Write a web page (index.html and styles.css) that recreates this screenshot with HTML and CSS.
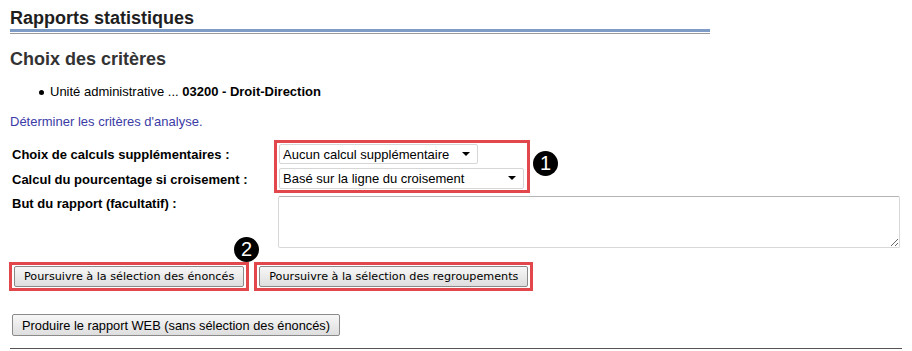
FILE: index.html
```html
<!DOCTYPE html>
<html lang="fr">
<head>
    <meta charset="UTF-8">
    <title>Rapports statistiques</title>
    <link rel="stylesheet" href="styles.css">
</head>
<body>
    <h1 class="page-title">Rapports statistiques</h1>

    <h2 class="section-title">Choix des critères</h2>
    <ul class="criteria">
        <li>Unité administrative ... <strong>03200 - Droit-Direction</strong></li>
    </ul>

    <a href="#" class="analyse-link">Déterminer les critères d'analyse.</a>

    <div class="form-grid">
        <div class="labels-pair">
            <label class="field-label">Choix de calculs supplémentaires :</label>
            <label class="field-label">Calcul du pourcentage si croisement :</label>
        </div>
        <div class="controls-pair">
            <div class="highlight selects">
                <span class="select-wrap select-short">
                    <select>
                        <option>Aucun calcul supplémentaire</option>
                    </select>
                </span>
                <span class="select-wrap select-long">
                    <select>
                        <option>Basé sur la ligne du croisement</option>
                    </select>
                </span>
            </div>
            <span class="marker marker-1">1</span>
        </div>

        <label class="field-label label-but">But du rapport (facultatif) :</label>
        <textarea class="but-text"></textarea>
    </div>

    <div class="actions">
        <span class="highlight">
            <button class="btn">Poursuivre à la sélection des énoncés</button>
        </span>
        <span class="highlight">
            <button class="btn">Poursuivre à la sélection des regroupements</button>
        </span>
        <span class="marker marker-2">2</span>
    </div>

    <div class="actions-web">
        <button class="btn btn-narrow">Produire le rapport WEB (sans sélection des énoncés)</button>
    </div>

    <hr class="bottom-rule">
</body>
</html>
```

FILE: styles.css
```css
body {
    margin: 0;
    padding: 0 10px;
    font-family: "Liberation Sans", Arial, sans-serif;
    font-size: 13px;
    color: #000;
    background: #fff;
}

.page-title {
    width: 700px;
    margin: 7px 0 0;
    font-size: 18px;
    line-height: 22px;
    color: #1e1e1e;
    border-bottom: 3px solid #7f9cc6;
    position: relative;
}
.page-title::after {
    content: "";
    position: absolute;
    left: 0;
    right: 0;
    bottom: -5px;
    height: 1px;
    background: #9a9a9a;
}

.section-title {
    margin: 16px 0 0;
    font-size: 18px;
    line-height: 22px;
    color: #333;
}

.criteria {
    margin: 14px 0 0;
    padding-left: 40px;
    line-height: 16px;
    list-style: none;
}
.criteria li {
    position: relative;
}
.criteria li::before {
    content: "";
    position: absolute;
    left: -11px;
    top: 6px;
    width: 5px;
    height: 5px;
    border-radius: 50%;
    background: #000;
}

.analyse-link {
    display: block;
    margin-top: 14px;
    line-height: 16px;
    color: #3b3ba6;
    text-decoration: none;
}

.form-grid {
    display: grid;
    grid-template-columns: 264px 1fr;
    margin-top: 10px;
}

.labels-pair {
    padding-top: 2px;
}
.field-label {
    display: block;
    padding-left: 2px;
    font-weight: bold;
    line-height: 25px;
}
.label-but {
    line-height: 16px;
    padding-top: 3px;
}

.controls-pair {
    display: flex;
    align-items: flex-end;
}

.highlight {
    display: inline-block;
    border: 3px solid #e2474b;
    padding: 1px 3px 1px 2px;
}

.selects {
    display: flex;
    flex-direction: column;
    align-items: flex-start;
    gap: 4px;
}

.select-wrap {
    position: relative;
    display: inline-block;
}
.select-wrap::after {
    content: "";
    position: absolute;
    right: 8px;
    top: 8px;
    border-left: 4px solid transparent;
    border-right: 4px solid transparent;
    border-top: 4px solid #000;
    pointer-events: none;
}
.select-wrap select {
    appearance: none;
    -webkit-appearance: none;
    height: 20px;
    padding: 0 0 0 3px;
    border: 1px solid #d6d6d6;
    border-radius: 2px;
    background: #fff;
    font-family: "Liberation Sans", Arial, sans-serif;
    font-size: 13px;
    color: #000;
}
.select-short select { width: 199px; }
.select-long select { width: 245px; height: 21px; }

.marker {
    display: inline-flex;
    align-items: center;
    justify-content: center;
    width: 25px;
    height: 25px;
    border-radius: 50%;
    background: #000;
    color: #fff;
    font-family: "Liberation Sans", Arial, sans-serif;
    font-size: 20px;
}
.marker-1 {
    margin: 0 0 17px 3px;
}

.but-text {
    width: 622px;
    height: 52px;
    margin: 3px 0 0 4px;
    padding: 2px;
    box-sizing: border-box;
    border: 1px solid #d8d8d8;
    border-top-color: #b4b4b4;
    border-radius: 2px;
    resize: both;
}

.actions {
    position: relative;
    display: flex;
    gap: 5px;
    margin-top: 14px;
    margin-left: -1px;
}
.actions .highlight {
    padding: 1px 2px;
}
.marker-2 {
    position: absolute;
    left: 225px;
    top: -25px;
}

.btn {
    height: 21px;
    padding: 0 9px;
    border: 1px solid #8a8a8a;
    border-radius: 2px;
    background: linear-gradient(#f7f7f7, #dedede);
    font-family: "DejaVu Sans", Tahoma, sans-serif;
    font-size: 11.2px;
    color: #000;
}

.actions-web {
    margin-top: 23px;
    margin-left: 2px;
}
.btn-narrow {
    height: 22px;
    font-family: "Liberation Sans", Arial, sans-serif;
    font-size: 12.8px;
}

.bottom-rule {
    margin: 12px 0 0;
    border: 0;
    border-top: 1px solid #555;
}
```
